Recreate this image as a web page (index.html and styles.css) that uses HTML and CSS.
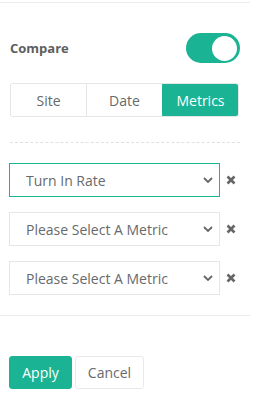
FILE: index.html
```html
<!DOCTYPE html>
<html lang="en">
<head>
    <meta charset="UTF-8">
    <title>Compare</title>
    <link rel="stylesheet" href="styles.css">
</head>
<body>
    <div class="panel">
        <div class="top-rule"></div>

        <!-- Compare toggle -->
        <div class="compare-row">
            <span class="compare-label">Compare</span>
            <div class="toggle on"><div class="knob"></div></div>
        </div>

        <!-- Segmented control -->
        <div class="segments">
            <div class="segment">Site</div>
            <div class="segment">Date</div>
            <div class="segment active">Metrics</div>
        </div>

        <div class="dashed"></div>

        <!-- Metric selects -->
        <div class="metric-list">
            <div class="metric-row">
                <div class="select focused">
                    <span>Turn In Rate</span>
                    <svg class="chevron" width="10" height="6" viewBox="0 0 10 6"><path d="M1 1l4 4 4-4" fill="none" stroke="#666" stroke-width="1.8"/></svg>
                </div>
                <svg class="remove" width="10" height="10" viewBox="0 0 10 10"><path d="M1.5 1.5l7 7M8.5 1.5l-7 7" stroke="#666" stroke-width="2.6"/></svg>
            </div>
            <div class="metric-row">
                <div class="select">
                    <span>Please Select A Metric</span>
                    <svg class="chevron" width="10" height="6" viewBox="0 0 10 6"><path d="M1 1l4 4 4-4" fill="none" stroke="#666" stroke-width="1.8"/></svg>
                </div>
                <svg class="remove" width="10" height="10" viewBox="0 0 10 10"><path d="M1.5 1.5l7 7M8.5 1.5l-7 7" stroke="#666" stroke-width="2.6"/></svg>
            </div>
            <div class="metric-row">
                <div class="select">
                    <span>Please Select A Metric</span>
                    <svg class="chevron" width="10" height="6" viewBox="0 0 10 6"><path d="M1 1l4 4 4-4" fill="none" stroke="#666" stroke-width="1.8"/></svg>
                </div>
                <svg class="remove" width="10" height="10" viewBox="0 0 10 10"><path d="M1.5 1.5l7 7M8.5 1.5l-7 7" stroke="#666" stroke-width="2.6"/></svg>
            </div>
        </div>

        <div class="bottom-rule"></div>

        <div class="actions">
            <button class="btn primary">Apply</button>
            <button class="btn">Cancel</button>
        </div>
    </div>
</body>
</html>
```

FILE: styles.css
```css
* {
    margin: 0;
    padding: 0;
    box-sizing: border-box;
}

body {
    font-family: "Open Sans", Arial, sans-serif;
    background-color: #fff;
    color: #666;
}

.panel {
    width: 250px;
}

.top-rule {
    margin-top: 2px;
    border-top: 1px solid #ececec;
}

/* Compare row */
.compare-row {
    display: flex;
    justify-content: space-between;
    align-items: center;
    padding: 0 10px 0 10px;
    margin-top: 30px;
}

.compare-label {
    font-size: 13px;
    font-weight: 700;
    color: #5e5e5e;
}

.toggle {
    width: 54px;
    height: 30px;
    border-radius: 15px;
    background-color: #1ab394;
    display: flex;
    align-items: center;
    justify-content: flex-end;
    padding-right: 3px;
}

.knob {
    width: 25px;
    height: 25px;
    border-radius: 50%;
    background-color: #fff;
}

/* Segmented control */
.segments {
    display: flex;
    margin: 20px 11px 0 10px;
    height: 34px;
    border: 1px solid #e5e6e7;
    border-radius: 3px;
    overflow: hidden;
}

.segment {
    flex: 1;
    display: flex;
    align-items: center;
    justify-content: center;
    font-size: 14px;
    color: #676a6c;
    border-left: 1px solid #e5e6e7;
}

.segment:first-child {
    border-left: none;
}

.segment.active {
    background-color: #1ab394;
    color: #fff;
    border-left-color: #1ab394;
}

.dashed {
    margin: 25px 10px 0 10px;
    border-top: 1px dashed #e0e0e0;
}

/* Metric rows */
.metric-list {
    margin-top: 20px;
    display: flex;
    flex-direction: column;
    gap: 15px;
    padding-left: 9px;
}

.metric-row {
    display: flex;
    align-items: center;
}

.select {
    width: 211px;
    height: 34px;
    border: 1px solid #e5e6e7;
    display: flex;
    align-items: center;
    justify-content: space-between;
    padding: 0 6px 0 16px;
    font-size: 14px;
    color: #676a6c;
}

.select.focused {
    border-color: #1ab394;
}

.remove {
    margin-left: 6px;
}

.bottom-rule {
    margin-top: 20px;
    border-top: 1px solid #ececec;
}

/* Buttons */
.actions {
    display: flex;
    gap: 3px;
    padding-left: 9px;
    margin-top: 40px;
}

.btn {
    font-family: "Open Sans", Arial, sans-serif;
    height: 33px;
    padding: 0 10px;
    font-size: 14px;
    border: 1px solid #e7eaec;
    border-radius: 3px;
    background-color: #fff;
    color: #676a6c;
}

.btn.primary {
    width: 63px;
    background-color: #1ab394;
    border-color: #1ab394;
    color: #fff;
}

.btn:not(.primary) {
    width: 69px;
}
```
